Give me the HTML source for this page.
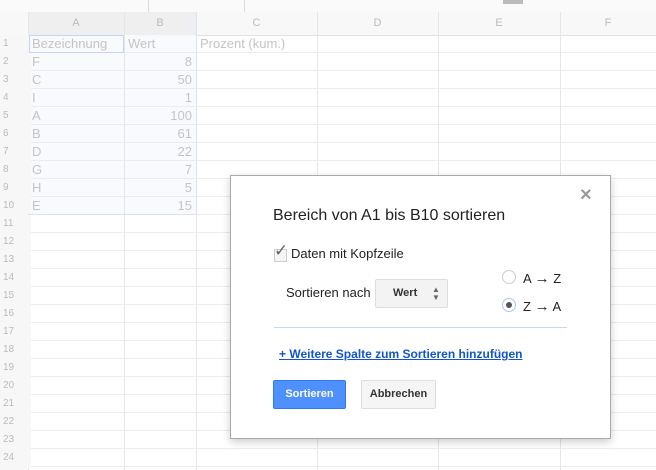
<!DOCTYPE html><html><head><style>
body{margin:0;width:656px;height:470px;overflow:hidden;background:#fff;font-family:"Liberation Sans",Arial,sans-serif;position:relative}
.a{position:absolute}
.vl{position:absolute;top:12px;height:458px;width:1px;background:#e6e6e6}
.hl{position:absolute;left:0;width:656px;height:1px;background:#ececec}
.rn{position:absolute;left:0;width:28px;font-size:10px;color:#bbb;padding-left:3px;background:#f7f7f7}
.ch{position:absolute;top:12px;height:23px;line-height:23px;font-size:11px;color:#bbb;text-align:center}
.c{position:absolute;font-size:13px;color:#c4c4c4;line-height:18px}
</style></head><body>
<div class="a" style="left:0;top:0;width:656px;height:12px;background:#fafafa;border-bottom:1px solid #e8e8e8"></div>
<div class="a" style="left:148px;top:0;width:1px;height:12px;background:#ddd"></div>
<div class="a" style="left:244px;top:0;width:1px;height:12px;background:#ddd"></div>
<div class="a" style="left:503px;top:0;width:20px;height:4px;background:#bbb"></div>
<div class="a" style="left:0;top:12px;width:656px;height:23px;background:#f8f8f8;border-bottom:1px solid #e2e2e2"></div>
<div class="a" style="left:28px;top:12px;width:168px;height:23px;background:#efefef"></div>
<div class="a" style="left:0;top:35px;width:28px;height:435px;background:#f7f7f7"></div>
<div class="a" style="left:28px;top:35px;width:168px;height:180px;background:#f8fafe"></div>
<div class="ch" style="left:28px;width:96px">A</div><div class="ch" style="left:124px;width:72px">B</div><div class="ch" style="left:196px;width:121px">C</div><div class="ch" style="left:317px;width:121px">D</div><div class="ch" style="left:438px;width:122px">E</div><div class="ch" style="left:560px;width:96px">F</div>
<div class="vl" style="left:28px"></div><div class="vl" style="left:124px"></div><div class="vl" style="left:196px"></div><div class="vl" style="left:317px"></div><div class="vl" style="left:438px"></div><div class="vl" style="left:560px"></div>
<div class="a" style="left:196px;top:12px;width:1px;height:203px;background:#d6e2f7"></div>
<div id="g"></div>
<script>
var g=document.getElementById('g'),h='';
for(var i=1;i<=24;i++){var t=35+(i-1)*18;h+='<div class="hl" style="top:'+(t+17)+'px"></div><div class="rn" style="top:'+t+'px;height:18px;line-height:18px">'+i+'</div>';}
var d=[['F',8],['C',50],['I',1],['A',100],['B',61],['D',22],['G',7],['H',5],['E',15]];
h+='<div class="c" style="left:32px;top:35px">Bezeichnung</div><div class="c" style="left:128px;top:35px">Wert</div><div class="c" style="left:200px;top:35px">Prozent (kum.)</div>';
d.forEach(function(r,k){var t=53+k*18;h+='<div class="c" style="left:32px;top:'+t+'px">'+r[0]+'</div><div class="c" style="left:124px;width:68px;text-align:right;top:'+t+'px">'+r[1]+'</div>';});
g.innerHTML=h;
</script>
<div class="a" style="left:29px;top:35px;width:93px;height:16px;border:1px solid #c5d6f5"></div>
<div class="a" style="left:28px;top:214px;width:168px;height:1px;background:#d6e2f7"></div>
<div class="a" style="left:230px;top:175px;width:379px;height:262px;background:#fff;border:1px solid #aaa;box-shadow:0 3px 8px rgba(0,0,0,.2)">
<div class="a" style="left:349px;top:8px;font-size:20px;color:#999;font-weight:bold">×</div>
<div class="a" style="left:42px;top:31px;font-size:16px;color:#222">Bereich von A1 bis B10 sortieren</div>
<div class="a" style="left:43px;top:73px;width:11px;height:11px;border:1px solid #ccc;background:#f5f5f5"></div>
<div class="a" style="left:43px;top:65px;font-size:17px;color:#666">✓</div>
<div class="a" style="left:60px;top:70px;font-size:13px;color:#222">Daten mit Kopfzeile</div>
<div class="a" style="left:55px;top:109px;font-size:13px;color:#222">Sortieren nach</div>
<div class="a" style="left:144px;top:103px;width:71px;height:27px;background:#f3f3f3;border:1px solid #ddd;border-radius:2px;font-size:11px;font-weight:bold;color:#333;line-height:27px"><span style="position:absolute;left:17px">Wert</span><span style="position:absolute;left:56px;font-size:8px;line-height:8px;top:6px;color:#666">▲<br>▼</span></div>
<div class="a" style="left:271px;top:94px;width:12px;height:12px;border:1px solid #ccc;border-radius:50%"></div>
<div class="a" style="left:292px;top:95px;font-size:13px;color:#222">A <span style="font-size:15px;line-height:13px">→</span> Z</div>
<div class="a" style="left:271px;top:122px;width:12px;height:12px;border:1px solid #aac4f0;border-radius:50%"><div style="margin:3px;width:6px;height:6px;border-radius:50%;background:#555"></div></div>
<div class="a" style="left:292px;top:123px;font-size:13px;color:#222">Z <span style="font-size:15px;line-height:13px">→</span> A</div>
<div class="a" style="left:43px;top:151px;width:293px;height:1px;background:#c5d6f5"></div>
<div class="a" style="left:48px;top:171px;font-size:12px;font-weight:bold;color:#1155cc;text-decoration:underline">+ Weitere Spalte zum Sortieren hinzufügen</div>
<div class="a" style="left:42px;top:204px;width:71px;height:27px;background:#4d90fe;border:1px solid #3079ed;border-radius:2px;color:#fff;font-size:11px;font-weight:bold;text-align:center;line-height:27px">Sortieren</div>
<div class="a" style="left:130px;top:204px;width:73px;height:27px;background:#f5f5f5;border:1px solid #ddd;border-radius:2px;color:#333;font-size:11px;font-weight:bold;text-align:center;line-height:27px">Abbrechen</div>
</div>
</body></html>
